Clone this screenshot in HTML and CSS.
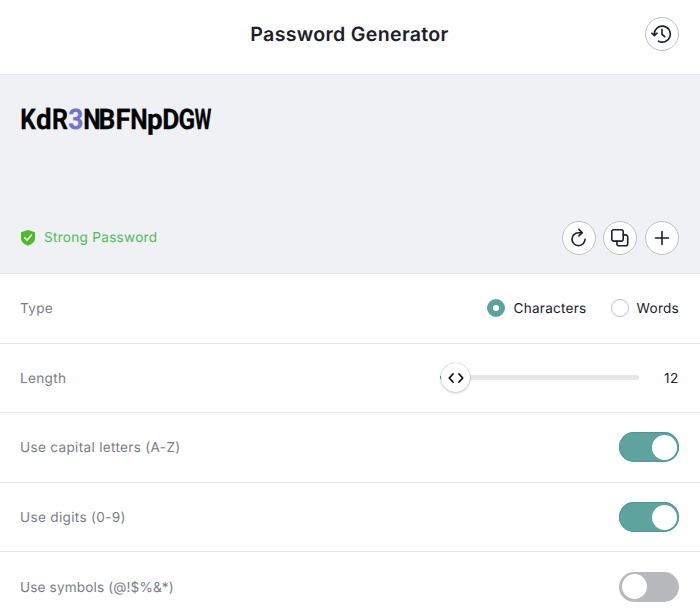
FILE: index.html
```html
<!DOCTYPE html>
<html lang="en">
<head>
<meta charset="utf-8">
<title>Password Generator</title>
<link rel="stylesheet" href="styles.css">
</head>
<body>
<main class="app">
  <header class="header">
    <h1 class="title">Password Generator</h1>
    <button class="round" aria-label="History"><svg width="22" height="22" viewBox="0 0 22 22"><path d="M3.3 11.7A8 8 0 1 1 7.6 18.2M.9 10.2l2.4 2.4 2.7-2.4M11 6.3v5l2.7 2.4"/></svg></button>
  </header>
  <section class="result">
    <div class="password"><span class="k">K</span><span class="d">d</span><span class="r">R</span><span class="digit">3</span><span class="n">N</span><span class="b">B</span><span class="f">F</span><span class="n">N</span><span class="d">p</span><span class="b">D</span><span class="g">G</span><span class="w">W</span></div>
    <div class="status">
      <svg class="shield" width="16" height="18" viewBox="0 0 16 18"><path class="plate" d="M8 1 15 3.3V9.5C15 13 11.7 15.2 8 16.7 4.3 15.2 1 13 1 9.5V3.3Z"/><path class="tick" d="m4.8 8.9 2.3 2.3 4.2-5"/></svg>
      <span class="strength">Strong Password</span>
      <div class="actions">
        <button class="round" aria-label="Regenerate"><svg width="22" height="22" viewBox="0 0 22 22"><path d="M17 12.2A6.5 6.5 0 1 1 10.5 5.7h3.5M10.9 2.4l3.4 3.3-3.4 3.2"/></svg></button>
        <button class="round" aria-label="Copy"><svg width="22" height="22" viewBox="0 0 22 22"><rect x="2.8" y="2.7" width="11.4" height="11.4" rx="2"/><path d="M14.2 7.9h2.5a2 2 0 0 1 2 2v6.8a2 2 0 0 1-2 2H9.9a2 2 0 0 1-2-2v-2.6"/></svg></button>
        <button class="round" aria-label="Add"><svg width="22" height="22" viewBox="0 0 22 22"><path d="M11 4.5v13M4.5 11h13"/></svg></button>
      </div>
    </div>
  </section>
  <section class="options">
    <div class="row"><span class="label">Type</span>
      <div class="radios"><span class="choice"><i class="radio on"></i><span>Characters</span></span><span class="choice"><i class="radio"></i><span>Words</span></span></div>
    </div>
    <div class="row"><span class="label">Length</span>
      <div class="slider"><div class="thumb"><svg width="18" height="14" viewBox="0 0 18 14"><path d="M6 3 2.3 7 6 11M12 3l3.7 4-3.7 4"/></svg></div></div>
      <span class="count">12</span>
    </div>
    <div class="row"><span class="label">Use capital letters (A-Z)</span><span class="toggle on"></span></div>
    <div class="row"><span class="label">Use digits (0-9)</span><span class="toggle on"></span></div>
    <div class="row"><span class="label symbols">Use symbols (@!$%&amp;*)</span><span class="toggle"></span></div>
  </section>
</main>
</body>
</html>
```

FILE: styles.css
```css
* { box-sizing: border-box; }
body { margin: 0; background: #fff; color: #1c202b; font: 13.6px/20px Inter, sans-serif; text-rendering: geometricPrecision; }
.app { height: 615px; overflow: hidden; }
.header { height: 75px; border-bottom: 1px solid #e6e7ea; display: grid; grid-template-columns: 34px 1fr 34px; align-items: center; padding: 0 21px 7px 20px; }
.title { grid-column: 2; margin: 0; text-align: center; font-size: 19.6px; line-height: 24px; font-weight: 600; letter-spacing: .3px; }
.round { width: 34px; height: 34px; padding: 0; border: 1px solid #c0c1c4; border-radius: 50%; background: #fff; display: grid; place-items: center; }
.round svg, .thumb svg { fill: none; stroke: #1c202b; stroke-width: 1.6; stroke-linecap: round; stroke-linejoin: round; }
.result { height: 199px; background: #f0f1f5; border-bottom: 1px solid #e3e4e8; padding: 27px 21px 18.5px 20px; display: flex; flex-direction: column; justify-content: space-between; }
.password { display: flex; color: #050608; font: 700 28.4px/35px Roboto, sans-serif; -webkit-text-stroke: .25px; }
.password span { width: 15.9px; display: flex; justify-content: center; }
.password .digit { color: #7172d3; transform: scaleX(.93); }
.k { transform: scaleX(.86); }
.d { transform: scaleX(.98); }
.r { transform: scaleX(.88); }
.n { transform: scaleX(.87); }
.b { transform: scaleX(.93); }
.f { transform: scaleX(.96); }
.g { transform: scaleX(.86); }
.w { transform: scaleX(.68); }
.status { display: flex; align-items: center; }
.shield { margin-right: 8px; }
.plate { fill: #4dbc29; }
.tick { fill: none; stroke: #fff; stroke-width: 1.6; stroke-linecap: round; stroke-linejoin: round; }
.strength { color: #51bb59; letter-spacing: .27px; }
.actions { display: flex; gap: 7.7px; margin-left: auto; }
.row { height: 69.6px; padding: 0 21px 0 20px; border-bottom: 1px solid #e8e8ea; display: flex; align-items: center; }
.label { color: #7b7d84; margin-right: auto; letter-spacing: .31px; padding-top: 2px; }
.symbols { letter-spacing: .14px; }
.radios { display: flex; gap: 24px; }
.choice { display: flex; align-items: center; gap: 8px; letter-spacing: .24px; }
.choice span { padding-top: 2px; }
.radio { width: 18px; height: 18px; border: 1px solid #bfc0c3; border-radius: 50%; }
.radio.on { border: 6px solid #5ba39e; }
.slider { width: 199px; height: 5px; border-radius: 3px; background: linear-gradient(90deg, #4d9993 10px, #e7e7e7 10px); display: flex; align-items: center; }
.thumb { flex: none; width: 29px; height: 29px; margin-left: 1px; background: #fff; border-radius: 50%; box-shadow: 0 0 1px #0005, 0 1px 3px #0003; display: grid; place-items: center; }
.thumb svg { stroke-width: 1.8; stroke: #050608; }
.count { width: 40px; text-align: right; letter-spacing: .6px; padding-top: 2px; }
.toggle { width: 60px; height: 30px; border-radius: 15px; padding: 2.5px; background: #b8b9bd; display: flex; }
.toggle::before { content: ""; width: 25px; height: 25px; border-radius: 50%; background: #fff; }
.toggle.on { background: #5fa39f; box-shadow: inset 0 0 0 1px #4b9993; justify-content: flex-end; }
```
